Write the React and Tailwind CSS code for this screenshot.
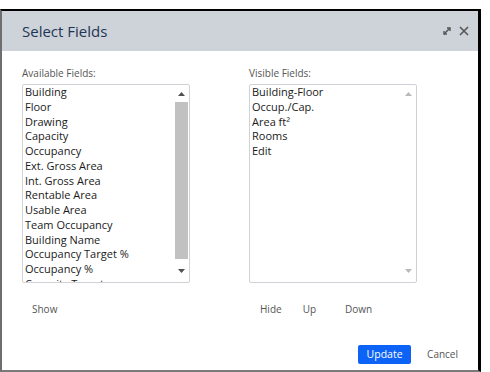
import { useState } from 'react';

const available = [
  'Building', 'Floor', 'Drawing', 'Capacity', 'Occupancy', 'Ext. Gross Area', 'Int. Gross Area',
  'Rentable Area', 'Usable Area', 'Team Occupancy', 'Building Name', 'Occupancy Target %',
  'Occupancy %', 'Capacity Target',
];
const visible = ['Building-Floor', 'Occup./Cap.', 'Area ft²', 'Rooms', 'Edit'];

function Arrow({ up, color }) {
  return (
    <svg width="7" height="4" viewBox="0 0 7 4" className="block">
      <polygon points={up ? '3.5,0 7,4 0,4' : '0,0 7,0 3.5,4'} fill={color} />
    </svg>
  );
}

function ListBox({ items, thumb }) {
  const arrow = thumb ? '#505050' : '#b9b9b9';
  return (
    <div className="flex h-[199px] overflow-hidden rounded-[2px] border border-[#cfd2d6] bg-white">
      <ul className="flex-1 pl-[2px] text-[11px] leading-[14.75px] text-[#1a1a1a]">
        {items.map(it => <li key={it} className="whitespace-nowrap">{it}</li>)}
      </ul>
      <div className="mr-[1px] flex w-[13px] flex-col items-center">
        <div className="flex h-[17px] items-center justify-center"><Arrow up color={arrow} /></div>
        <div className="flex-1 self-stretch">
          {thumb && <div className="h-[157px] bg-[#c1c1c1]" />}
        </div>
        <div className="flex h-[22px] items-center justify-center"><Arrow color={arrow} /></div>
      </div>
    </div>
  );
}

export default function App() {
  const [fields] = useState({ available, visible });
  return (
    <div className="h-[372px] w-[490px] bg-white pt-[9px] font-['Open_Sans',sans-serif]">
      <div className="flex h-[363px] w-[481px] flex-col border-t-2 border-r-[3px] border-b-2 border-l-2 border-t-black border-r-black border-b-[#7a7a7a] border-l-[#6e6e6e] bg-white">
        <div className="flex h-[40px] items-center justify-between bg-[#cdd3d8] pl-[20px] pr-[8px]">
          <div className="text-[15px] text-[#1f3556]">Select Fields</div>
          <div className="flex items-center gap-[6px] text-[#555]">
            <svg width="10" height="10" viewBox="0 0 10 10" fill="none" stroke="#555" strokeWidth="1.4">
              <path d="M2 8 L8 2" />
              <path d="M5 2 H8 V5" fill="none" />
              <path d="M2 5 V8 H5" fill="none" />
            </svg>
            <svg width="12" height="12" viewBox="0 0 12 12" stroke="#555" strokeWidth="1.6">
              <path d="M2 2 L10 10 M10 2 L2 10" />
            </svg>
          </div>
        </div>

        <div className="grid grid-cols-[168px_168px] gap-x-[59px] pl-[20px] pt-[15px]">
          <div>
            <div className="mb-[4px] text-[10px] leading-[14px] text-[#555]">Available Fields:</div>
            <ListBox items={fields.available} thumb />
            <div className="mt-[19px] flex text-[10px] leading-[14px] text-[#555]">
              <button className="ml-[10px]">Show</button>
            </div>
          </div>
          <div>
            <div className="mb-[4px] text-[10px] leading-[14px] text-[#555]">Visible Fields:</div>
            <ListBox items={fields.visible} />
            <div className="mt-[19px] flex text-[10px] leading-[14px] text-[#555]">
              <button className="ml-[11px]">Hide</button>
              <button className="ml-[21px]">Up</button>
              <button className="ml-[29px]">Down</button>
            </div>
          </div>
        </div>

        <div className="mt-auto mb-[6px] flex items-center justify-end pr-[20px]">
          <button className="h-[19px] w-[53px] rounded-[2px] bg-[#0c63f5] text-[10.5px] text-white">Update</button>
          <button className="ml-[16px] text-[10px] text-[#555]">Cancel</button>
        </div>
      </div>
    </div>
  );
}
